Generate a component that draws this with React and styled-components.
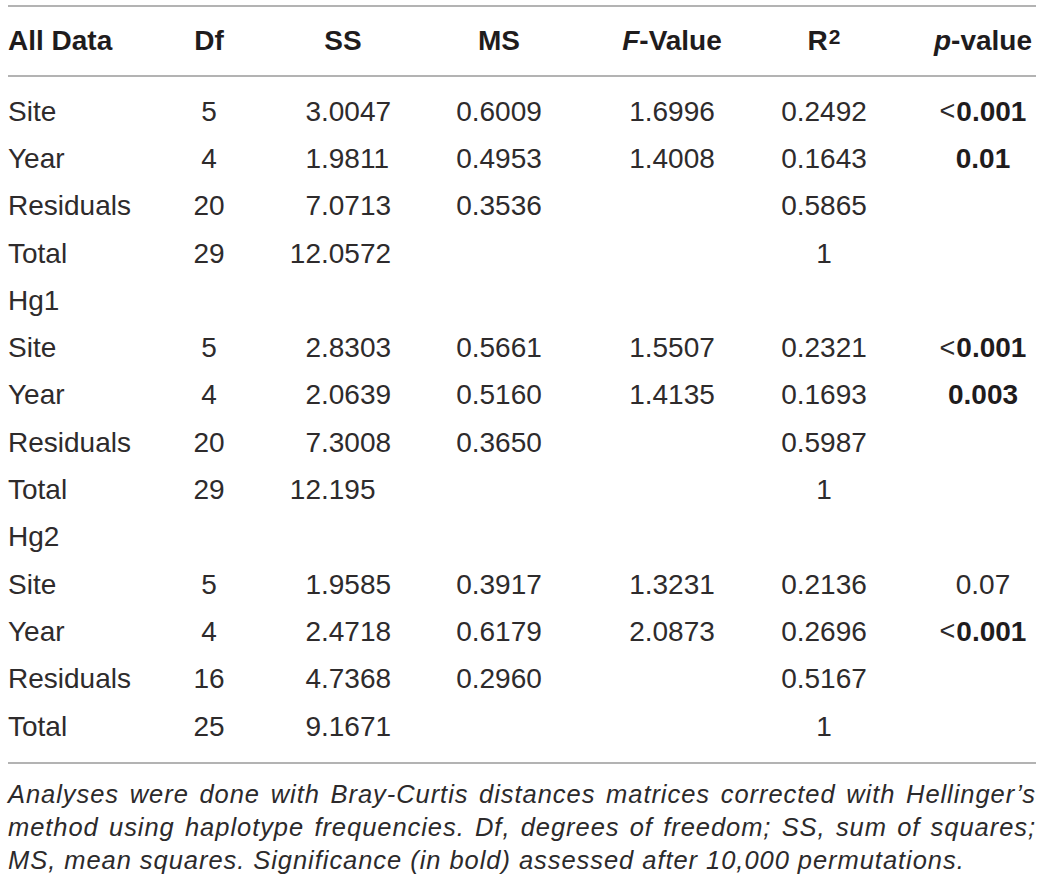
import styled, { createGlobalStyle } from "styled-components";

const GlobalStyle = createGlobalStyle`
  html, body {
    margin: 0;
    padding: 0;
    background: #ffffff;
  }
  body {
    font-family: "Liberation Sans", Arial, sans-serif;
    color: #231f20;
  }
`

const Page = styled.div`
  width: 1028px;
  padding: 5px 6px 0 8px;
`

const Table = styled.div`
  display: grid;
  grid-template-columns: 140px 122px 146px 166px 180px 124px 150px;
  border-top: 2px solid #b3b3b3;
  border-bottom: 2px solid #b3b3b3;
`

const Row = styled.div`
  display: contents;
`

const HeadCell = styled.div`
  height: 68px;
  display: flex;
  align-items: center;
  justify-content: ${(p) => (p.$left ? "flex-start" : "center")};
  padding-left: ${(p) => p.$pad || 0}px;
  border-bottom: 2px solid #b3b3b3;
  font-size: 28px;
  font-weight: 700;
  white-space: nowrap;
  color: #1f1c1d;

  i {
    font-style: italic;
  }

  sup {
    font-size: 21px;
    line-height: 0;
    position: relative;
    top: -4px;
    vertical-align: super;
    margin-left: 1px;
  }
`

const Spacer = styled.div`
  grid-column: 1 / -1;
  height: ${(p) => p.$h}px;
`

const Cell = styled.div`
  height: 47.3px;
  display: flex;
  align-items: center;
  justify-content: ${(p) => (p.$left ? "flex-start" : "center")};
  padding-left: ${(p) => p.$pad || 0}px;
  font-size: 28px;
  white-space: nowrap;
  color: #2e2b2c;
`

const DecimalCell = styled.div`
  height: 47.3px;
  display: flex;
  align-items: center;
  padding-left: 11px;
  font-size: 28px;
  white-space: nowrap;
  color: #2e2b2c;
`

const IntPart = styled.span`
  display: inline-block;
  width: 40px;
  text-align: right;
`

const Strong = styled.span`
  font-weight: 700;
  color: #1f1c1d;
`

const Less = styled.span`
  font-size: 27px;
  margin-right: 1px;
`

const Caption = styled.div`
  margin-top: 14px;
  font-size: 25.5px;
  font-style: italic;
  line-height: 33px;
  letter-spacing: 0.95px;
  color: #2c2a2b;
`

const CaptionLine = styled.div`
  white-space: nowrap;
  text-align: ${(p) => (p.$justify ? "justify" : "left")};
  text-align-last: ${(p) => (p.$justify ? "justify" : "left")};
`

const rows = [
  ["Site", "5", "3.0047", "0.6009", "1.6996", "0.2492", { v: "0.001", lt: true, b: true }],
  ["Year", "4", "1.9811", "0.4953", "1.4008", "0.1643", { v: "0.01", b: true }],
  ["Residuals", "20", "7.0713", "0.3536", "", "0.5865", null],
  ["Total", "29", "12.0572", "", "", "1", null],
  ["Hg1", "", "", "", "", "", null],
  ["Site", "5", "2.8303", "0.5661", "1.5507", "0.2321", { v: "0.001", lt: true, b: true }],
  ["Year", "4", "2.0639", "0.5160", "1.4135", "0.1693", { v: "0.003", b: true }],
  ["Residuals", "20", "7.3008", "0.3650", "", "0.5987", null],
  ["Total", "29", "12.195", "", "", "1", null],
  ["Hg2", "", "", "", "", "", null],
  ["Site", "5", "1.9585", "0.3917", "1.3231", "0.2136", { v: "0.07" }],
  ["Year", "4", "2.4718", "0.6179", "2.0873", "0.2696", { v: "0.001", lt: true, b: true }],
  ["Residuals", "16", "4.7368", "0.2960", "", "0.5167", null],
  ["Total", "25", "9.1671", "", "", "1", null],
]

function Decimal({ value }) {
  if (!value) return <DecimalCell />
  const [a, b] = value.split(".")
  return (
    <DecimalCell>
      <IntPart>{a}</IntPart>.{b}
    </DecimalCell>
  )
}

function PValue({ p }) {
  if (!p) return <Cell $pad={44} />
  const num = p.b ? <Strong>{p.v}</Strong> : p.v
  return (
    <Cell $pad={44}>
      {p.lt && <Less>&lt;</Less>}
      {num}
    </Cell>
  )
}

export default function App() {
  return (
    <Page>
      <GlobalStyle />
      <Table>
        <Row>
          <HeadCell $left>All Data</HeadCell>
          <HeadCell>Df</HeadCell>
          <HeadCell>SS</HeadCell>
          <HeadCell>MS</HeadCell>
          <HeadCell><i>F</i>-Value</HeadCell>
          <HeadCell>R<sup>2</sup></HeadCell>
          <HeadCell $pad={44}><i>p</i>-value</HeadCell>
        </Row>
        <Spacer $h={11} />
        {rows.map((r, i) => (
          <Row key={i}>
            <Cell $left>{r[0]}</Cell>
            <Cell>{r[1]}</Cell>
            <Decimal value={r[2]} />
            <Cell>{r[3]}</Cell>
            <Cell>{r[4]}</Cell>
            <Cell>{r[5]}</Cell>
            <PValue p={r[6]} />
          </Row>
        ))}
        <Spacer $h={12} />
      </Table>
      <Caption>
        <CaptionLine $justify>Analyses were done with Bray-Curtis distances matrices corrected with Hellinger’s</CaptionLine>
        <CaptionLine $justify>method using haplotype frequencies. Df, degrees of freedom; SS, sum of squares;</CaptionLine>
        <CaptionLine>MS, mean squares. Significance (in bold) assessed after 10,000 permutations.</CaptionLine>
      </Caption>
    </Page>
  );
}
